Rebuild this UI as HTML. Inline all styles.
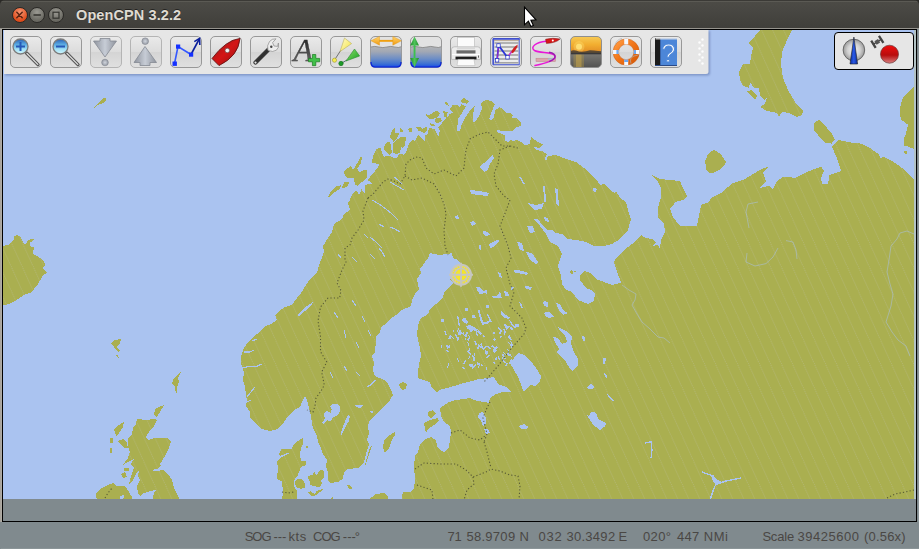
<!DOCTYPE html>
<html><head><meta charset="utf-8"><title>OpenCPN 3.2.2</title>
<style>
html,body{margin:0;padding:0;}
body{width:919px;height:549px;overflow:hidden;position:relative;background:#808a8e;font-family:"Liberation Sans","DejaVu Sans",sans-serif;}
div{position:absolute;}
#titlebar{left:0;top:0;width:919px;height:28px;border-radius:5px 5px 0 0;background:linear-gradient(#3b3a36 0,#3b3a36 1px,#5b5a54 1px,#5b5a54 2px,#4c4b46 2px,#403f3b 27px,#403f3b);}
#titlebar .t{left:76px;top:6px;font-size:14.5px;font-weight:bold;color:#dfdbd2;letter-spacing:0.1px;white-space:nowrap;line-height:18px;text-shadow:0 -1px 0 rgba(0,0,0,.5);}
.wb{top:7px;width:16px;height:16px;border-radius:50%;box-sizing:border-box;border:1px solid #2b2a27;}
#canvasbg{left:3px;top:30px;width:911px;height:491px;background:#808a8e;}
.ln{background:#000;}
#map{position:absolute;left:3px;top:30px;}
#inst{left:834px;top:32px;width:80px;height:38px;}
#status{left:0;top:522px;width:919px;height:27px;background:#808a8e;color:#4a4744;font-size:13px;line-height:27px;white-space:nowrap;}
#status span{position:absolute;top:1px;}
</style></head><body>
<div style="left:0;top:0;width:919px;height:10px;background:#2a2926"></div>
<div id="titlebar">
 <div class="wb" style="left:11.5px;background:radial-gradient(circle at 50% 30%,#f79774,#de4c1b 70%);"></div>
 <div class="wb" style="left:29px;background:radial-gradient(circle at 50% 30%,#9a9992,#6a6962 70%);"></div>
 <div class="wb" style="left:48px;background:radial-gradient(circle at 50% 30%,#9a9992,#6a6962 70%);"></div>
 <div class="t">OpenCPN 3.2.2</div>
 <svg width="919" height="30" style="position:absolute;left:0;top:0"><path d="M524.5,7.2 V24.8 L528.4,21.2 L530.9,26.6 L533.4,25.4 L530.9,20.2 L536,19.8 Z" fill="#fff" stroke="#000" stroke-width="1.1" stroke-linejoin="miter"/><g stroke="#3a2a22" stroke-width="1.5" fill="none" stroke-linecap="round"><path d="M16.8,12.3 l5.4,5.4 M22.2,12.3 l-5.4,5.4" stroke="#5a2412"/><path d="M34,15 h6.4" stroke="#33322e"/><rect x="53" y="12.2" width="6" height="6" stroke="#33322e" stroke-width="1.2"/></g></svg>
</div>
<div style="left:0;top:28px;width:919px;height:1px;background:#96948e"></div>
<div style="left:0;top:29px;width:1px;height:520px;background:#a8a49d"></div>
<div style="left:1px;top:29px;width:1px;height:493px;background:#b0aca5"></div>
<div style="left:918px;top:29px;width:1px;height:520px;background:#8b9598"></div>
<div style="left:1px;top:548px;width:918px;height:1px;background:#8b9598;z-index:5"></div>
<div style="left:914px;top:30px;width:2px;height:469px;background:#b3c3c5;z-index:3"></div>
<div class="ln" style="left:2px;top:29px;width:915px;height:1px"></div>
<div class="ln" style="left:2px;top:29px;width:1px;height:493px"></div>
<div class="ln" style="left:916px;top:29px;width:1px;height:493px"></div>
<div class="ln" style="left:2px;top:521px;width:915px;height:1px"></div>
<div id="canvasbg"></div>
<svg id="map" width="911" height="469" viewBox="3 30 911 469" shape-rendering="crispEdges">
<defs><pattern id="h" width="11" height="24.2" patternUnits="userSpaceOnUse"><path d="M0,0 L11,24.2" stroke="#b5b87c" stroke-width="0.85" stroke-dasharray="1.1,1.1" fill="none" shape-rendering="auto"/></pattern></defs>
<rect x="3" y="30" width="911" height="469" fill="#aac3f0"/>
<g id="land">
<path d="M401,501 L403,492 L410,492 L414,488 L415,480 L414,466 L415,456 L418,452 L420,444 L426,439 L431,437 L436,440 L437,446 L440,450 L444,452 L449,447 L450,440 L451,432 L450,426 L444,422 L441,416 L440,408 L443,406 L449,402 L456,400 L464,399 L470,398 L477,401 L484,402 L489,403 L490,398 L496,394 L502,392 L512,392 L506,387 L498,384 L494,377 L488,378 L479,379 L472,381 L464,383 L454,386 L447,388 L442,389 L437,392 L432,388 L430,382 L423,380 L418,378 L418,372 L419,364 L421,356 L420,348 L418,340 L417,334 L418,326 L420,319 L428,314 L430,309 L436,304 L442,299 L445,291 L449,288 L453,283 L450,280 L461,264 L458,260 L453,258 L452,253 L447,254 L439,255 L430,253 L428,258 L423,265 L420,269 L421,273 L417,279 L418,284 L419,289 L415,294 L412,300 L411,306 L402,310 L396,315 L389,320 L386,324 L382,326 L379,334 L376,336 L376,340 L375,352 L372,356 L374,362 L373,370 L375,376 L384,380 L388,384 L391,390 L393,395 L390,400 L388,402 L382,408 L376,414 L370,420 L368,426 L369,433 L367,440 L369,444 L366,454 L364,462 L360,467 L358,468 L348,469 L344,472 L343,479 L338,482 L330,483 L328,480 L328,472 L326,466 L327,460 L323,454 L321,448 L318,442 L317,436 L314,430 L312,424 L311,416 L309,408 L307,400 L305.6,397.4 L304.6,396.6 L303.4,399 L302,402 L300,407 L294,410 L288,416 L284,422 L278,429 L270,431 L262,429 L256,424 L250,418 L250,412 L246,406 L247,400 L246,395 L245,387 L243,380 L244,372 L241,364 L241,356 L244,348 L249,341 L254,336 L260,332 L264,327 L271,324 L277,320 L275,315 L278,312 L285,307 L292,305 L297,298 L301,293 L306,285 L311,278 L317,273 L320,262 L321,260 L324,252 L323,246 L328,238 L332,232 L334,224 L342,219 L344,214 L350,210 L348,203 L352,197 L349.5,200 L352.8,193.6 L356,190.3 L359.3,194.6 L361.5,189.2 L365.4,194.6 L364.8,185.9 L368,183.7 L372.5,183.7 L368,180.4 L370.3,176 L374.6,171.7 L377.9,167.3 L380,163.5 L375.7,163.5 L371.4,163 L373.6,154.2 L376.8,148.7 L380.7,148.2 L382.3,153.1 L384.2,157 L388,155.4 L391.9,157 L396.8,158.6 L399,153.7 L403.9,154.8 L406,152.6 L407.7,147.2 L409.3,142.8 L413.2,139 L414.8,141.7 L418,135 L422,137.9 L425.2,142.2 L424.6,136.2 L427.9,133.5 L429,128 L434.5,129 L438.3,136.2 L440,130.8 L438.3,127.5 L442,123 L446.6,118.2 L449.8,113.9 L453,112.8 L449.8,109.5 L453,104.6 L457.5,104.6 L460.2,107.3 L460.8,104 L466.2,106.2 L463.5,110 L461.3,113.9 L458,119.3 L457,131.3 L460.2,130.3 L461.9,123.7 L466.2,116 L470.6,109.5 L475,105.1 L473.3,112.8 L472.8,120.4 L473.9,122.6 L477.7,118.2 L480.4,112.8 L482,108.4 L481,103 L485.4,100.2 L491.4,100.7 L494.6,104.6 L493,108.4 L491.4,112.8 L489.2,119.3 L491.4,120.4 L494,117.1 L495.2,110.6 L499.6,106.8 L503.9,110.6 L506.7,113.3 L510,112.8 L512.7,115.5 L512.1,117.7 L516.5,118.2 L521.4,122.6 L521.4,125.3 L516.5,127.5 L512.7,131.3 L505.6,130.8 L496.8,130.3 L496.8,131.9 L502.3,134.1 L505.6,135.7 L504.5,140 L507.8,142.3 L511,139 L512.7,141.2 L516.5,140 L520.9,141.7 L524.7,145.6 L529.6,143.9 L531.3,136.8 L535,140 L540,143.4 L543,144 L539,148 L534,147 L536,150 L542,151 L547,154 L545,158 L546,161 L548,156 L556,155 L566,159 L576,162 L584,168 L592,176 L598,182 L600,185 L604,184 L610,190 L615,193 L616,191 L620,198 L626,202 L628,210 L631,219 L628,230 L620,239 L612,244 L604,246 L594,246 L586,242 L576,240 L568,239 L562,234 L556,233 L552,230 L547,230 L543,226 L538,219 L534,219 L540,226 L546,234 L550,242 L558,246 L562,254 L560,260 L558,266 L561,276 L562,284 L566,290 L572,292 L578,300 L588,304 L594,301 L595,294 L591,290 L586,288 L580,280 L580,275 L585,271 L590,273 L596,279 L604,282 L612,285 L616,284 L620,283 L622,285 L619,277 L616,269 L614,262 L617,257 L624,250 L632,244 L638,238 L641,235 L646,238 L652,239 L656,243 L652,246 L658,245 L660,249 L661,240 L665,232 L664,224 L658,217 L658,208 L660,200 L661,198 L661,188 L658,182 L652,175 L660,179 L670,180 L680,181 L683,188 L687,196 L683,200 L675.5,202 L670,209 L673,217 L680,226 L697,226 L699.5,213 L701,205 L709,202 L711,198 L721,193 L732,183.5 L745,179 L753,174 L762,169 L769,166.6 L763,172 L766,181 L759,188 L769,186 L773,189 L777,181 L784,176.5 L795.5,178 L807,172 L821,166.6 L824,171 L821,178 L822,183.5 L828,183.5 L829.5,175 L841,171 L836.5,157 L832,147 L838,140 L852,142.6 L859,143 L867.7,146.6 L878.7,154 L881,158.6 L883,156.4 L891.8,160.8 L902.8,168.5 L914,180 L914,501Z" fill="#aaaf50" />
<path d="M3,246 L9,244.5 L14,240 L14.5,236 L17.5,235 L21,237.5 L24,244 L26,244.5 L27.5,241 L31,239 L35,239 L30.5,242.5 L30,246 L34,247.5 L32.5,254 L37.5,256 L44,261 L45,265.5 L42.5,267.5 L47,272.5 L42.5,276 L37.5,285 L31,292.5 L24,295 L15,301 L7.5,304.5 L3,304.5Z" fill="#aaaf50" />
<path d="M94,107.5 L98,103.5 L103.5,98 L106,98 L105.5,101.5 L103,103 L100,104 L98.5,104.5 L94.5,108Z" fill="#aaaf50" />
<path d="M713.7,149.7 L720.7,154 L726.4,162.4 L720.7,169.4 L710.8,173.7 L706,169.4 L705.2,161 L708,154Z" fill="#aaaf50" />
<path d="M814,123 L819,119.6 L823,124 L827,128 L832,134 L834.6,139.6 L831.6,143.6 L825,142.6 L819.5,137 L814,130Z" fill="#aaaf50" />
<path d="M760,30 L755,36 L749,43 L753,48 L751,56 L750,64 L743,64 L739,72 L740,80 L743,86 L749,88 L750,82 L754,88 L759,88 L760,96 L765,100 L767,97 L765,104 L760,107 L767,111 L777,113 L779,117 L782,112 L789,113 L797,117 L802,115 L803,111 L795,102 L788,90 L783,78 L781,64 L782,52 L787,40 L791,32 L792,30Z" fill="#aaaf50" />
<path d="M747,91 L752,90 L757,96 L755,100 L750,95Z" fill="#aaaf50" />
<path d="M914,86.4 L907,93 L902.8,98.4 L900.6,105 L899.5,113.8 L901.7,120 L908,124.7 L906,133.5 L904,137.8 L904,145.5 L908,146.6 L914,148.8Z" fill="#aaaf50" />
<path d="M904,151 L907,151 L907,154 L905,154Z" fill="#aaaf50" />
<path d="M111,343 L115,340 L121,339 L120,343 L117,347 L120,351 L118,352 L114,347Z" fill="#aaaf50" />
<path d="M116,355 L117,354.5 L119,357.5 L118,358Z" fill="#aaaf50" />
<path d="M181,372 L178,378 L179,382 L177,387 L177,393 L175.6,392 L175,386 L172,384 L174,378 L178,374Z" fill="#aaaf50" />
<path d="M155,409 L159,407 L164,405 L160,412 L157,417 L154,415Z" fill="#aaaf50" />
<path d="M137,419 L146,420 L154,419 L157,420 L154,426 L149,432 L146,437 L148,440 L154,438 L168,438 L171,442 L169,448 L166,454 L162,461 L159,464 L161,466 L157,469 L150,470 L156,471 L163,470 L168,474 L172,480 L174,488 L178,496 L181,501 L152,501 L154,493 L156,490 L150,491 L144,493 L140,496 L138,494 L137,486 L140,480 L138,476 L139,470 L136,474 L133,480 L129,484 L131,476 L134,468 L131,464 L134,459 L128,462 L123,465 L128,458 L130,452 L128,446 L128,438 L132,434 L133,428 L136,424Z" fill="#aaaf50" />
<path d="M114,429 L119,425 L124,422 L123,427 L119,433 L116,436Z" fill="#aaaf50" />
<path d="M110,438 L113,438 L113,443 L110.5,443Z" fill="#aaaf50" />
<path d="M110,448 L111.6,448 L111.6,453 L110,453Z" fill="#aaaf50" />
<path d="M118,441 L123,439 L127,443 L128,448 L125,448 L121,445Z" fill="#aaaf50" />
<path d="M121,474 L125,472 L127,477 L123,478Z" fill="#aaaf50" />
<path d="M124,468 L129,468 L129,471 L124,471Z" fill="#aaaf50" />
<path d="M96,494 L100,489 L106,486 L113,483 L116,486 L125,486 L129,492 L132,497 L131.6,501 L123,501 L124,495 L120,496 L119.6,501 L97,501Z" fill="#aaaf50" />
<path d="M303.3,437 L301.4,438.8 L295.8,442.5 L293.4,445.6 L291.5,449.3 L281.6,449.3 L278.5,454.3 L280.5,455.8 L289,452.4 L289.4,453.6 L281,457.4 L277.3,461.7 L277.9,470.4 L276.7,479 L281.6,481.5 L282.9,488.9 L282.2,501 L297.1,501 L296.5,490.2 L294,486.5 L294.6,479 L297.7,475.3 L299.6,470.4 L301.4,466.7 L305.7,465.4 L306.4,461.7 L301.4,460.5 L299.6,455.5 L300.8,449.3 L302.7,444.4Z" fill="#aaaf50" />
<path d="M294.6,481.5 L298.9,478.4 L302.7,479.6 L305.1,484 L304.5,487.7 L301.4,488.9 L297.1,487.7 L295.2,484.6Z" fill="#aaaf50" />
<path d="M307.6,476.5 L312.6,474.7 L314.4,472.2 L316.9,475.3 L318.7,471.6 L321.8,469.7 L324.3,471 L324.3,477.8 L321.2,480.3 L321.8,484 L320,487 L315.6,486.5 L310.7,485.2 L309.5,480.9Z" fill="#aaaf50" />
<path d="M308.2,492.6 L310.7,491.4 L314.4,493.9 L316.9,490.8 L323,489 L320,492 L316.3,495.1 L313.2,496.4 L310.7,495.7Z" fill="#aaaf50" />
<path d="M347.2,484.6 L350.3,485.2 L352.2,488.3 L350.3,489.6 L347.8,487.7Z" fill="#aaaf50" />
<path d="M372,445 L370,452 L366,464 L365,465 L368,454 L370,447Z" fill="#aaaf50" />
<path d="M395,432 L390,435 L384,440 L383,448 L385,453 L389,448 L392,440 L395,435Z" fill="#aaaf50" />
<path d="M424,423 L430,420 L438,418 L439,421 L434,425 L428,429 L426,433 L425,428Z" fill="#aaaf50" />
<path d="M428,412 L433,410 L436,414 L431,418 L428,416Z" fill="#aaaf50" />
<path d="M399,384 L403,382 L407,384 L406,389 L402,390 L400,388Z" fill="#aaaf50" />
<path d="M367,501 L376,494 L384,493 L388,496 L389,501Z" fill="#aaaf50" />
<path d="M331.7,496.4 L335.4,501 L331,501Z" fill="#aaaf50" />
<path d="M569.5,271 L572,270 L573.5,273 L571,274.5Z" fill="#aaaf50" />
<path d="M574,270.5 L576,270.8 L575.6,272.4 L574.2,272Z" fill="#aaaf50" />
<path d="M328.2,196.8 L331,191.4 L336.4,185.9 L340.8,185.4 L340.2,188.6 L334.2,192.5 L330,196.5Z" fill="#aaaf50" />
<path d="M341.9,188 L344,182.6 L349.5,181.5 L347.3,187Z" fill="#aaaf50" />
<path d="M344,171.7 L350.6,165.7 L352.8,169.5 L355,167.3 L360.4,157 L362,157.5 L360.4,164 L357.2,168.4 L359.9,172.8 L363.7,169.5 L367.5,170 L367,177.2 L362.6,181.5 L360.4,182.6 L357.7,185.9 L355,184.8 L353.9,178.2 L348.4,178.2 L345.1,176Z" fill="#aaaf50" />
<path d="M383.7,147.7 L386.4,142.8 L390.2,141.7 L391,147 L392,152 L389.5,154.5 L386,152 L384,150Z" fill="#aaaf50" />
<path d="M393.5,142.8 L397.3,139.5 L400,137.3 L406,137.3 L405,145 L402.8,148.3 L401.7,146 L399.5,152.6 L396.8,154.3 L393.5,152.6 L393,147.2Z" fill="#aaaf50" />
<path d="M390.2,137.3 L390.8,132.4 L394.6,128 L395.1,132.4 L399,133.5 L397.3,137.9 L393.5,141.7Z" fill="#aaaf50" />
<path d="M399.5,127 L403.9,132 L400.6,132.4Z" fill="#aaaf50" />
<path d="M408.3,128.6 L412,128.3 L411.5,132.4 L408.6,131.3Z" fill="#aaaf50" />
<path d="M416,127.5 L420,126.4 L422.5,129.1 L426.8,126.4 L427,130 L424,133 L421,131.3 L418.5,130.8Z" fill="#aaaf50" />
<path d="M425.2,114 L429.6,115 L433.4,112.2 L437.8,110.5 L440,113.8 L436.7,117.7 L432,119.3 L429,118.7Z" fill="#aaaf50" />
<path d="M434.5,118.6 L441,118 L442,121 L437,123.7 L435,121Z" fill="#aaaf50" />
<path d="M429.6,123.1 L434,124.2 L435.6,126.4 L431,126.4Z" fill="#aaaf50" />
<path d="M443.2,111.1 L447.6,112.2 L446.5,117.5 L444,117Z" fill="#aaaf50" />
<path d="M460.2,101 L463.5,97.5 L466,99.6 L469.5,101.7 L467,103.6 L462.4,103Z" fill="#aaaf50" />
<path d="M445,102 L447.6,102.6 L448.7,105.7 L446,105Z" fill="#aaaf50" />
<path d="M306,446 L308,446 L308,447.5 L306,447.5Z" fill="#aaaf50" />
</g>
<g id="hatch">
<path d="M401,501 L403,492 L410,492 L414,488 L415,480 L414,466 L415,456 L418,452 L420,444 L426,439 L431,437 L436,440 L437,446 L440,450 L444,452 L449,447 L450,440 L451,432 L450,426 L444,422 L441,416 L440,408 L443,406 L449,402 L456,400 L464,399 L470,398 L477,401 L484,402 L489,403 L490,398 L496,394 L502,392 L512,392 L506,387 L498,384 L494,377 L488,378 L479,379 L472,381 L464,383 L454,386 L447,388 L442,389 L437,392 L432,388 L430,382 L423,380 L418,378 L418,372 L419,364 L421,356 L420,348 L418,340 L417,334 L418,326 L420,319 L428,314 L430,309 L436,304 L442,299 L445,291 L449,288 L453,283 L450,280 L461,264 L458,260 L453,258 L452,253 L447,254 L439,255 L430,253 L428,258 L423,265 L420,269 L421,273 L417,279 L418,284 L419,289 L415,294 L412,300 L411,306 L402,310 L396,315 L389,320 L386,324 L382,326 L379,334 L376,336 L376,340 L375,352 L372,356 L374,362 L373,370 L375,376 L384,380 L388,384 L391,390 L393,395 L390,400 L388,402 L382,408 L376,414 L370,420 L368,426 L369,433 L367,440 L369,444 L366,454 L364,462 L360,467 L358,468 L348,469 L344,472 L343,479 L338,482 L330,483 L328,480 L328,472 L326,466 L327,460 L323,454 L321,448 L318,442 L317,436 L314,430 L312,424 L311,416 L309,408 L307,400 L305.6,397.4 L304.6,396.6 L303.4,399 L302,402 L300,407 L294,410 L288,416 L284,422 L278,429 L270,431 L262,429 L256,424 L250,418 L250,412 L246,406 L247,400 L246,395 L245,387 L243,380 L244,372 L241,364 L241,356 L244,348 L249,341 L254,336 L260,332 L264,327 L271,324 L277,320 L275,315 L278,312 L285,307 L292,305 L297,298 L301,293 L306,285 L311,278 L317,273 L320,262 L321,260 L324,252 L323,246 L328,238 L332,232 L334,224 L342,219 L344,214 L350,210 L348,203 L352,197 L349.5,200 L352.8,193.6 L356,190.3 L359.3,194.6 L361.5,189.2 L365.4,194.6 L364.8,185.9 L368,183.7 L372.5,183.7 L368,180.4 L370.3,176 L374.6,171.7 L377.9,167.3 L380,163.5 L375.7,163.5 L371.4,163 L373.6,154.2 L376.8,148.7 L380.7,148.2 L382.3,153.1 L384.2,157 L388,155.4 L391.9,157 L396.8,158.6 L399,153.7 L403.9,154.8 L406,152.6 L407.7,147.2 L409.3,142.8 L413.2,139 L414.8,141.7 L418,135 L422,137.9 L425.2,142.2 L424.6,136.2 L427.9,133.5 L429,128 L434.5,129 L438.3,136.2 L440,130.8 L438.3,127.5 L442,123 L446.6,118.2 L449.8,113.9 L453,112.8 L449.8,109.5 L453,104.6 L457.5,104.6 L460.2,107.3 L460.8,104 L466.2,106.2 L463.5,110 L461.3,113.9 L458,119.3 L457,131.3 L460.2,130.3 L461.9,123.7 L466.2,116 L470.6,109.5 L475,105.1 L473.3,112.8 L472.8,120.4 L473.9,122.6 L477.7,118.2 L480.4,112.8 L482,108.4 L481,103 L485.4,100.2 L491.4,100.7 L494.6,104.6 L493,108.4 L491.4,112.8 L489.2,119.3 L491.4,120.4 L494,117.1 L495.2,110.6 L499.6,106.8 L503.9,110.6 L506.7,113.3 L510,112.8 L512.7,115.5 L512.1,117.7 L516.5,118.2 L521.4,122.6 L521.4,125.3 L516.5,127.5 L512.7,131.3 L505.6,130.8 L496.8,130.3 L496.8,131.9 L502.3,134.1 L505.6,135.7 L504.5,140 L507.8,142.3 L511,139 L512.7,141.2 L516.5,140 L520.9,141.7 L524.7,145.6 L529.6,143.9 L531.3,136.8 L535,140 L540,143.4 L543,144 L539,148 L534,147 L536,150 L542,151 L547,154 L545,158 L546,161 L548,156 L556,155 L566,159 L576,162 L584,168 L592,176 L598,182 L600,185 L604,184 L610,190 L615,193 L616,191 L620,198 L626,202 L628,210 L631,219 L628,230 L620,239 L612,244 L604,246 L594,246 L586,242 L576,240 L568,239 L562,234 L556,233 L552,230 L547,230 L543,226 L538,219 L534,219 L540,226 L546,234 L550,242 L558,246 L562,254 L560,260 L558,266 L561,276 L562,284 L566,290 L572,292 L578,300 L588,304 L594,301 L595,294 L591,290 L586,288 L580,280 L580,275 L585,271 L590,273 L596,279 L604,282 L612,285 L616,284 L620,283 L622,285 L619,277 L616,269 L614,262 L617,257 L624,250 L632,244 L638,238 L641,235 L646,238 L652,239 L656,243 L652,246 L658,245 L660,249 L661,240 L665,232 L664,224 L658,217 L658,208 L660,200 L661,198 L661,188 L658,182 L652,175 L660,179 L670,180 L680,181 L683,188 L687,196 L683,200 L675.5,202 L670,209 L673,217 L680,226 L697,226 L699.5,213 L701,205 L709,202 L711,198 L721,193 L732,183.5 L745,179 L753,174 L762,169 L769,166.6 L763,172 L766,181 L759,188 L769,186 L773,189 L777,181 L784,176.5 L795.5,178 L807,172 L821,166.6 L824,171 L821,178 L822,183.5 L828,183.5 L829.5,175 L841,171 L836.5,157 L832,147 L838,140 L852,142.6 L859,143 L867.7,146.6 L878.7,154 L881,158.6 L883,156.4 L891.8,160.8 L902.8,168.5 L914,180 L914,501Z" fill="url(#h)" />
<path d="M760,30 L755,36 L749,43 L753,48 L751,56 L750,64 L743,64 L739,72 L740,80 L743,86 L749,88 L750,82 L754,88 L759,88 L760,96 L765,100 L767,97 L765,104 L760,107 L767,111 L777,113 L779,117 L782,112 L789,113 L797,117 L802,115 L803,111 L795,102 L788,90 L783,78 L781,64 L782,52 L787,40 L791,32 L792,30Z" fill="url(#h)" />
<path d="M3,246 L9,244.5 L14,240 L14.5,236 L17.5,235 L21,237.5 L24,244 L26,244.5 L27.5,241 L31,239 L35,239 L30.5,242.5 L30,246 L34,247.5 L32.5,254 L37.5,256 L44,261 L45,265.5 L42.5,267.5 L47,272.5 L42.5,276 L37.5,285 L31,292.5 L24,295 L15,301 L7.5,304.5 L3,304.5Z" fill="url(#h)" />
<path d="M137,419 L146,420 L154,419 L157,420 L154,426 L149,432 L146,437 L148,440 L154,438 L168,438 L171,442 L169,448 L166,454 L162,461 L159,464 L161,466 L157,469 L150,470 L156,471 L163,470 L168,474 L172,480 L174,488 L178,496 L181,501 L152,501 L154,493 L156,490 L150,491 L144,493 L140,496 L138,494 L137,486 L140,480 L138,476 L139,470 L136,474 L133,480 L129,484 L131,476 L134,468 L131,464 L134,459 L128,462 L123,465 L128,458 L130,452 L128,446 L128,438 L132,434 L133,428 L136,424Z" fill="url(#h)" />
<path d="M303.3,437 L301.4,438.8 L295.8,442.5 L293.4,445.6 L291.5,449.3 L281.6,449.3 L278.5,454.3 L280.5,455.8 L289,452.4 L289.4,453.6 L281,457.4 L277.3,461.7 L277.9,470.4 L276.7,479 L281.6,481.5 L282.9,488.9 L282.2,501 L297.1,501 L296.5,490.2 L294,486.5 L294.6,479 L297.7,475.3 L299.6,470.4 L301.4,466.7 L305.7,465.4 L306.4,461.7 L301.4,460.5 L299.6,455.5 L300.8,449.3 L302.7,444.4Z" fill="url(#h)" />
</g>
<g id="lakes">
<path d="M510,363 L518,353 L524,355 L530,360 L536,368 L541,376 L540,382 L535,386 L530,385 L526,390 L523,391 L521,384 L518,377 L514,370Z" fill="#aac3f0" />
<path d="M558,327 L566,331 L572,336 L571,344 L574,352 L578,359 L578,366 L572,371 L569,367 L566,362 L562,357 L556,352 L559,349 L555,342 L553,337 L558,338 L562,344 L567,342 L565,335 L560,331Z" fill="#aac3f0" />
<path d="M479,413 L483,412 L486,418 L486,424 L483,426 L481,421 L478,417Z" fill="#aac3f0" />
<path d="M484,429 L488,429 L490,433 L486,434Z" fill="#aac3f0" />
<path d="M519,426 L524,424 L529,427 L526,429 L521,429Z" fill="#aac3f0" />
<path d="M330,406.2 L332.8,403.5 L337.7,404 L340.4,407.3 L339.3,412.8 L336,416 L332.8,417.7 L330.6,421.5 L327.3,420.4 L323.5,423.7 L322.4,422.6 L325.1,418.3 L323.5,415 L326.2,410.6 L330.6,412.8 L331.7,409.5Z" fill="#aac3f0" />
<path d="M348,415 L349.7,416 L349.2,420.4 L345.9,425.9 L343.2,431.4 L341.5,434.6 L341,432.5 L343.2,425.9 L345.9,419.3Z" fill="#aac3f0" />
<path d="M354,405 L359,405.4 L363.4,405.4 L359.6,408.4 L356.8,407Z" fill="#aac3f0" />
<path d="M370,410.4 L373.2,411.6 L372.6,413 L370,412Z" fill="#aac3f0" />
<path d="M367.2,386 L371,383.6 L375.4,379.6 L376,380.6 L371.6,385 L367.6,387.6Z" fill="#aac3f0" />
<path d="M479,167 L484,163 L488,159 L493,155 L494,158 L490,164 L488,170 L484,172 L482,169Z" fill="#aac3f0" />
<path d="M517,242 L522,243 L524,251 L520,250Z" fill="#aac3f0" />
<path d="M526,252 L532,253 L538,262 L536,264 L530,260Z" fill="#aac3f0" />
<path d="M527,226 L533,226 L535,232 L530,233Z" fill="#aac3f0" />
<path d="M528,203 L536,205 L544,203 L542,209 L534,210Z" fill="#aac3f0" />
<path d="M556,303 L560,304 L563,310 L568,313 L563,315 L559,310Z" fill="#aac3f0" />
<path d="M545,312 L550,312 L554,317 L548,318Z" fill="#aac3f0" />
<path d="M543,302 L547,302 L548,307 L544,306Z" fill="#aac3f0" />
<path d="M582,336 L585,337 L585,341 L583,341Z" fill="#aac3f0" />
<path d="M587,387 L591,384 L595,387 L592,389 L588,389Z" fill="#aac3f0" />
<path d="M603,358 L606,358 L605,364 L603,364Z" fill="#aac3f0" />
<path d="M604,373 L607,375 L607.6,378 L605,377Z" fill="#aac3f0" />
<path d="M586.5,415 L589,416 L591,411.5 L595,412 L597,414.6 L598,419 L602,421 L606,423.4 L604.6,427 L602,428 L600,431 L597,427.6 L594,426 L591,421.6Z" fill="#aac3f0" />
<path d="M525,286 L532,287 L531,290 L526,289Z" fill="#aac3f0" />
<path d="M504,291 L508,292 L509,296 L505,295Z" fill="#aac3f0" />
<path d="M544,217 L548,218 L549,222 L545,221Z" fill="#aac3f0" />
<path d="M519,177 L521,177.6 L525,184 L523.4,184Z" fill="#aac3f0" />
<path d="M543,186 L545,186 L546,202 L544.4,202Z" fill="#aac3f0" />
<path d="M555,188 L557.6,189 L559,206 L556.6,205Z" fill="#aac3f0" />
<path d="M593,188 L597,188.6 L596,192 L593.6,191.4Z" fill="#aac3f0" />
<path d="M470,190 L480,191 L489,193 L488,196 L478,195 L471,194Z" fill="#aac3f0" />
<path d="M297,315 L304,308 L313,302 L312,304 L305,311 L299,316Z" fill="#aac3f0" />
</g>
<g id="lakes2" fill="#aac3f0" stroke="none">
<path d="M476,286.5 L480,287.6 L483.5,291 L487.4,289.8 L487.4,295.3 L484.6,292.6 L480,294.7 L477.5,291Z"/>
<path d="M492,295.5 L497,296 L499.5,292 L501,294 L501.6,298 L496,298 L492.5,297.5Z"/>
<path d="M504.5,292 L507,293 L507.6,296 L505,296Z"/>
<path d="M511,286 L513.6,287 L513.4,290 L511.4,289.5Z"/>
<path d="M519,302 L521,303 L523,308 L521.4,307.6Z"/>
<path d="M500.5,310.6 L504.3,313.9 L509.8,317.7 L508,319 L503,317 L501,314Z"/>
<path d="M508.7,319 L512,323 L516,328 L514.6,328 L510.6,323.6Z"/>
<path d="M515,324 L519.6,323.7 L518.6,327 L515.6,327Z"/>
<path d="M504,323.7 L506.4,324.6 L508.7,329 L506.6,329 L504.6,326.4Z"/>
<path d="M478,310 L479.6,310 L481.4,317 L483.6,322.6 L487,321.4 L490.6,319.4 L491.4,321 L487.4,323.6 L482.6,325 L480.6,321 L479,315Z"/>
<path d="M486.4,314 L488,314.4 L491.6,321.6 L490,321.6Z"/>
<path d="M465,308.5 L468,308 L467.6,311 L465.4,311Z"/>
<path d="M471.5,315.4 L475,315 L476,318 L472.6,318.4Z"/>
<path d="M457,316 L458.4,316.4 L460,326 L458.6,326Z"/>
<path d="M461.7,319 L465,317.7 L468,322 L466.4,323.7 L463,322Z"/>
<path d="M466,326 L470,325 L474,327 L478,329.6 L476,331 L471,329.6 L467,328.6Z"/>
<path d="M441,319.4 L443.6,319 L444,322 L441.6,322Z"/>
<path d="M485.7,305 L488.6,304.6 L489,308 L486.4,308Z"/>
<path d="M479,245 L481,245.6 L481,250 L479.4,249Z"/>
<path d="M489,244 L493,242 L497,240 L500,241 L496,244 L493,247 L490,248Z"/>
<path d="M483,231 L488,232 L490,235 L486,236 L483.6,234Z"/>
<path d="M498,272 L500.6,273 L502,278 L499.6,277Z"/>
<path d="M470,222 L474,221 L476,224 L472,226Z"/>
<path d="M455,216 L458,215 L459,219 L456,219.6Z"/>
<path d="M514,270 L521,270.6 L528,273 L527,275 L520,273.4 L514.6,272.4Z"/>
<path d="M544,301 L547.6,302 L548,307 L545,306Z"/>
<path d="M544,312.6 L549,313 L553,317 L549,318 L545,316Z"/>
<path d="M464.4,332.6 L463.7,334.6 L462.3,334.1 L463.0,332.1Z"/>
<path d="M482.4,364.0 L482.8,366.1 L481.5,366.4 L481.1,364.3Z"/>
<path d="M508.0,348.5 L509.4,353.7 L508.5,354.0 L507.1,348.7Z"/>
<path d="M461.3,331.4 L462.1,334.2 L460.4,334.7 L459.6,331.9Z"/>
<path d="M447.6,349.6 L448.7,351.5 L447.2,352.3 L446.2,350.5Z"/>
<path d="M486.6,346.5 L483.6,350.1 L482.5,349.2 L485.5,345.6Z"/>
<path d="M466.9,335.2 L466.1,339.8 L465.1,339.7 L466.0,335.0Z"/>
<path d="M478.3,362.1 L479.2,364.8 L477.4,365.4 L476.4,362.7Z"/>
<path d="M476.6,331.2 L478.4,336.2 L477.1,336.6 L475.3,331.7Z"/>
<path d="M496.6,350.5 L494.7,352.7 L493.5,351.7 L495.4,349.4Z"/>
<path d="M481.5,343.4 L483.3,348.4 L482.0,348.9 L480.2,343.9Z"/>
<path d="M487.7,367.6 L486.7,370.3 L485.5,369.8 L486.5,367.1Z"/>
<path d="M442.3,345.4 L441.9,347.6 L441.0,347.4 L441.3,345.2Z"/>
<path d="M451.3,335.8 L448.1,339.6 L447.3,339.0 L450.5,335.2Z"/>
<path d="M470.4,337.6 L468.7,340.5 L467.4,339.8 L469.1,336.8Z"/>
<path d="M511.2,354.3 L511.8,356.8 L510.9,357.1 L510.2,354.5Z"/>
<path d="M456.2,334.8 L458.2,338.2 L457.2,338.8 L455.2,335.4Z"/>
<path d="M507.8,352.6 L510.3,355.1 L509.0,356.4 L506.5,353.9Z"/>
<path d="M468.0,341.6 L469.4,345.5 L468.5,345.9 L467.1,342.0Z"/>
<path d="M510.9,343.4 L511.9,347.3 L510.9,347.6 L509.9,343.7Z"/>
<path d="M479.6,366.2 L478.6,368.0 L477.6,367.5 L478.7,365.7Z"/>
<path d="M452.1,336.7 L450.1,339.1 L449.3,338.5 L451.3,336.1Z"/>
<path d="M512.3,345.7 L511.6,347.7 L510.7,347.4 L511.4,345.4Z"/>
<path d="M492.4,345.4 L495.0,348.0 L494.2,348.8 L491.6,346.2Z"/>
<path d="M494.5,338.1 L496.0,339.6 L494.7,340.9 L493.2,339.4Z"/>
<path d="M467.9,332.5 L466.6,336.1 L464.9,335.5 L466.2,331.9Z"/>
<path d="M486.0,350.4 L486.8,354.9 L485.7,355.1 L484.9,350.6Z"/>
<path d="M498.6,356.1 L500.4,359.4 L499.3,360.0 L497.4,356.8Z"/>
<path d="M512.4,359.3 L511.6,361.6 L510.1,361.1 L510.9,358.7Z"/>
<path d="M472.4,363.6 L473.3,368.9 L472.0,369.1 L471.1,363.8Z"/>
<path d="M447.3,344.7 L449.1,347.8 L447.4,348.8 L445.6,345.7Z"/>
<path d="M475.8,353.9 L474.7,355.7 L473.3,354.9 L474.3,353.1Z"/>
<path d="M497.6,357.7 L496.7,360.0 L495.1,359.4 L495.9,357.0Z"/>
<path d="M492.2,345.3 L492.8,347.3 L491.7,347.6 L491.2,345.6Z"/>
<path d="M487.7,350.7 L488.6,354.2 L486.7,354.7 L485.8,351.2Z"/>
<path d="M478.2,330.0 L482.0,333.8 L480.8,335.0 L477.0,331.2Z"/>
<path d="M494.1,331.3 L495.4,333.5 L493.8,334.4 L492.5,332.2Z"/>
<path d="M459.6,337.9 L457.7,341.3 L456.6,340.7 L458.6,337.3Z"/>
<path d="M498.8,327.2 L502.4,330.8 L501.3,331.9 L497.7,328.3Z"/>
<path d="M470.0,363.5 L471.9,366.8 L470.6,367.5 L468.7,364.3Z"/>
<path d="M502.8,357.2 L504.0,361.7 L502.9,362.0 L501.7,357.5Z"/>
<path d="M473.5,355.9 L475.7,358.0 L474.6,359.0 L472.5,356.9Z"/>
<path d="M474.7,358.5 L475.7,360.2 L474.8,360.8 L473.8,359.0Z"/>
<path d="M497.8,347.2 L494.8,350.7 L493.4,349.5 L496.4,345.9Z"/>
<path d="M463.0,366.6 L464.8,368.4 L463.9,369.2 L462.1,367.4Z"/>
<path d="M479.7,345.1 L478.9,349.4 L477.1,349.1 L477.9,344.8Z"/>
<path d="M507.9,363.3 L506.2,366.3 L505.0,365.7 L506.7,362.7Z"/>
<path d="M472.2,328.8 L473.0,330.7 L471.4,331.3 L470.7,329.4Z"/>
<path d="M504.5,331.3 L505.6,335.4 L504.6,335.7 L503.5,331.6Z"/>
<path d="M510.1,334.5 L510.7,337.7 L509.2,338.0 L508.7,334.7Z"/>
<path d="M463.2,333.3 L466.3,336.5 L465.7,337.1 L462.5,334.0Z"/>
<path d="M473.0,354.6 L474.2,358.1 L473.1,358.5 L471.8,355.0Z"/>
<path d="M449.1,363.2 L448.2,368.1 L447.2,368.0 L448.1,363.0Z"/>
<path d="M460.8,330.1 L459.9,335.1 L458.1,334.8 L459.0,329.7Z"/>
<path d="M470.2,347.9 L469.5,351.4 L468.3,351.2 L468.9,347.6Z"/>
<path d="M470.8,327.8 L472.2,331.7 L470.5,332.3 L469.1,328.4Z"/>
<path d="M483.3,335.2 L484.9,336.8 L484.3,337.5 L482.7,335.9Z"/>
<path d="M470.5,364.2 L471.2,366.1 L469.6,366.7 L469.0,364.8Z"/>
<path d="M508.5,335.6 L512.2,339.3 L511.1,340.4 L507.4,336.7Z"/>
<path d="M494.6,337.8 L495.9,339.9 L494.7,340.6 L493.5,338.4Z"/>
<path d="M511.0,326.6 L513.6,329.2 L512.2,330.5 L509.6,328.0Z"/>
<path d="M476.3,364.8 L473.2,368.5 L472.1,367.7 L475.2,364.0Z"/>
<path d="M479.6,362.8 L480.1,365.7 L479.0,365.9 L478.5,363.0Z"/>
<path d="M466.0,360.2 L464.6,364.1 L463.3,363.7 L464.8,359.8Z"/>
<path d="M512.5,360.8 L510.5,364.4 L508.9,363.5 L510.9,359.9Z"/>
<path d="M504.0,354.5 L502.3,356.6 L501.3,355.8 L503.1,353.7Z"/>
<path d="M452.7,336.7 L454.9,339.0 L454.0,339.9 L451.8,337.6Z"/>
<path d="M456.1,333.5 L456.5,335.6 L455.3,335.8 L454.9,333.7Z"/>
<path d="M457.1,357.2 L459.5,361.4 L458.6,362.0 L456.2,357.8Z"/>
<path d="M469.0,338.3 L469.6,340.4 L467.7,340.9 L467.1,338.8Z"/>
<path d="M488.9,356.2 L486.8,358.7 L485.8,357.9 L487.9,355.4Z"/>
<path d="M502.9,351.3 L506.3,354.7 L505.5,355.4 L502.1,352.0Z"/>
<path d="M494.9,349.8 L495.2,351.6 L493.6,351.9 L493.2,350.1Z"/>
<path d="M508.7,341.8 L510.1,343.2 L509.5,343.8 L508.1,342.4Z"/>
<path d="M487.9,345.3 L491.3,348.6 L490.1,349.8 L486.7,346.5Z"/>
<path d="M504.5,328.5 L506.1,332.8 L504.8,333.2 L503.2,329.0Z"/>
<path d="M502.4,336.4 L500.7,338.4 L499.5,337.4 L501.2,335.3Z"/>
<path d="M476.0,340.8 L476.8,345.0 L475.1,345.4 L474.3,341.1Z"/>
<path d="M445.6,330.8 L446.8,335.2 L445.6,335.5 L444.4,331.2Z"/>
<path d="M489.9,355.4 L488.0,357.6 L486.9,356.7 L488.7,354.5Z"/>
<path d="M473.5,357.2 L474.8,360.8 L473.6,361.2 L472.3,357.6Z"/>
<path d="M509.7,326.5 L506.6,330.2 L505.1,329.0 L508.2,325.3Z"/>
<path d="M511.1,340.6 L512.9,345.5 L512.0,345.9 L510.2,341.0Z"/>
<path d="M503.2,354.0 L505.8,358.4 L504.5,359.1 L502.0,354.7Z"/>
<path d="M470.2,356.2 L469.1,359.2 L468.2,358.9 L469.3,355.9Z"/>
<path d="M501.7,330.0 L501.0,334.4 L499.1,334.1 L499.9,329.7Z"/>
<path d="M459.9,327.8 L457.4,332.1 L456.6,331.7 L459.1,327.3Z"/>
<path d="M494.9,361.7 L495.5,363.6 L493.9,364.1 L493.4,362.1Z"/>
<path d="M459.1,337.4 L457.9,339.6 L456.8,338.9 L458.0,336.7Z"/>
<path d="M502.5,358.6 L506.2,362.2 L504.8,363.6 L501.2,360.0Z"/>
<path d="M468.3,350.5 L471.9,354.1 L470.9,355.1 L467.3,351.6Z"/>
<path d="M450.3,345.6 L449.8,348.4 L448.1,348.1 L448.6,345.3Z"/>
<path d="M469.2,334.8 L470.3,339.0 L469.3,339.2 L468.2,335.1Z"/>
<path d="M478.5,343.9 L481.7,347.2 L480.8,348.1 L477.5,344.9Z"/>
<path d="M454.6,329.9 L454.2,332.0 L453.1,331.8 L453.5,329.7Z"/>
</g>
<g id="streaks" fill="none" stroke="#aac3f0" stroke-width="1.1" stroke-linecap="butt">
<polyline points="372,200 379,204 386,209"/>
<polyline points="386,209 392,214 398,220"/>
<polyline points="394,177 398,180 402,184"/>
<polyline points="390,182 397,186 404,190"/>
<polyline points="379,224 384,227"/>
<polyline points="390,227 395,229 400,232"/>
<polyline points="364,234 368,238"/>
<polyline points="370,237 376,242 382,248"/>
<polyline points="379,248 382,252 385,257"/>
<polyline points="338,254 341,258"/>
<polyline points="352,257 357,262"/>
<polyline points="370,254 375,259"/>
<polyline points="242,368 249,366.5 255,367 262,364"/>
<polyline points="247,397 251,392 255,387"/>
<polyline points="244,352 250,352 254,350"/>
<polyline points="252,341 257,339"/>
<polyline points="247,402 251,400"/>
<polyline points="334,312 338,318"/>
<polyline points="352,300 356,306"/>
<polyline points="362,316 365,322"/>
<polyline points="344,330 346,338"/>
<polyline points="356,342 359,348"/>
<polyline points="368,330 371,336"/>
<polyline points="330,372 333,378"/>
<polyline points="344,366 347,371"/>
<polyline points="356,372 360,376"/>
</g><g id="borders" fill="none" stroke="#4e5032" stroke-width="1.1" stroke-dasharray="1.2,2.2" shape-rendering="auto" opacity="0.9">
<polyline points="368,198 374,193 383,182 388,179 394,181 400,184 405,176 406,164 410,160 416,157 422,158 426,168 434,174 444,170 450,173 456,176 464,168 465,158 466,150 470,139 480,134 488,132 496,140 502,146 510,146 518,148"/>
<polyline points="405,176 412,180 422,178 428,181 434,184 440,194 444,204 446,214 444,230 445,246 448,255"/>
<polyline points="510,146 500,150 498,164 494,174 496,186 504,196 510,200 504,216 500,226 504,236 508,246 511,258 506,268 510,284 514,292 510,306 516,312 522,318 526,328 524,334 510,350 498,366 484,382"/>
<polyline points="368,198 363,211 364,220 358,230 352,238 350,245 345,248 345,260 346,262 342,270 337,283 341,290.6 339.6,298 328,298 320.5,307 318,321 320.5,336.5 320.5,351.7 326.8,362 321.7,372 324.3,385 321,391 316,398 315,406 313,412 307,410"/>
<polyline points="451,433 460,430 470,438 480,440 486,435"/>
<polyline points="490,402 486,410 483,418 485,426 487,434 484,442"/>
<polyline points="484,442 487,452 489,460 491,468"/>
<polyline points="415,469 424,463 440,464 456,464 466,470 473,477 486,472 491,469 500,471 510,475 518,476 520,486 519,500"/>
<polyline points="473,477 474,484 467,490 464,500"/>
<polyline points="417,485 426,488 432,490 433,500"/>
<polyline points="282,492 288,493 294,492"/>
<polyline points="105,498 108,493 112,488"/>
<polyline points="887,498 895,494 905,492 914,490"/>
</g>
<g id="rivers" fill="none" stroke="#aac3f0" stroke-width="0.9" shape-rendering="auto" opacity="0.55">
<polyline points="622,285 629,290 636,294 635,300 632,305 637,314 642,322 650,329 658,337 664,338 670,343"/>
<polyline points="758,202 748,204 746,212 749,228"/>
<polyline points="747,253 746,262 755,266 766,263.6 773,257 778,248"/>
<polyline points="786,240.6 793,242 796,250 797,259"/>
<polyline points="914,234 907,231 900,233 897,239 891,246 889,260 887,272 890,284 893,294 891,306 886,322 892,332 898,340 906,346 910,356"/>
</g>
<g id="rivers2" fill="none" stroke="#aac3f0" stroke-width="1.3" shape-rendering="crispEdges">
<polyline points="645,443 651,441.6 652,450 651,458"/>
<polyline points="702,472 713,476 714,480 716,484 720,483 726,481"/>
<polyline points="726,481 741,478"/>
<polyline points="716,484 714,488 710,500"/>
<polyline points="607,394 613.6,401"/>
</g>
<path d="M711,475 L714,476 L716,479 L720,481 L722,483 L716,485.5 L713,481 Z" fill="#aac3f0"/>
<g id="gps" shape-rendering="auto"><circle cx="461" cy="274.8" r="11" fill="#c6c6c0"/><circle cx="461" cy="274.8" r="9" fill="#f3e42c"/>
<circle cx="461" cy="274.8" r="8.2" fill="none" stroke="#c9c9bf" stroke-width="1.7" stroke-dasharray="1.1,1.5" opacity="0.8"/>
<circle cx="461" cy="274.8" r="6.4" fill="none" stroke="#c6c6c0" stroke-width="1.7"/><circle cx="461" cy="274.8" r="5.5" fill="#f3e42c"/>
<path d="M461,262.8 V286.8 M449,274.8 H473" stroke="#c6c6c0" stroke-width="1.9" fill="none"/></g>
</svg>
<svg id="tbsvg" width="712" height="48" viewBox="4 30 712 48" style="position:absolute;left:4px;top:30px;overflow:visible">
<defs>
<linearGradient id="bg" x1="0" y1="0" x2="0" y2="1"><stop offset="0" stop-color="#eaeaea"/><stop offset="0.5" stop-color="#dcdcdc"/><stop offset="0.5" stop-color="#d4d4d4"/><stop offset="1" stop-color="#e0e0e0"/></linearGradient>
<radialGradient id="gryr" cx="0.5" cy="0.5" r="0.5"><stop offset="0" stop-color="#d0d5de"/><stop offset="1" stop-color="#9398a2"/></radialGradient>
<linearGradient id="gry" x1="0" y1="0" x2="1" y2="0"><stop offset="0" stop-color="#8a8f99"/><stop offset="0.5" stop-color="#c6ccd6"/><stop offset="1" stop-color="#8a8f99"/></linearGradient>
<linearGradient id="lens" x1="0" y1="0" x2="0" y2="1"><stop offset="0" stop-color="#2c5fb4"/><stop offset="0.35" stop-color="#58a8e0"/><stop offset="0.7" stop-color="#a4e2f6"/><stop offset="1" stop-color="#d4f6fc"/></linearGradient>
<linearGradient id="red" x1="0" y1="0" x2="1" y2="1"><stop offset="0" stop-color="#8c1616"/><stop offset="0.5" stop-color="#d41616"/><stop offset="1" stop-color="#941010"/></linearGradient>
<linearGradient id="water" x1="0" y1="0" x2="0" y2="1"><stop offset="0" stop-color="#b2b4b7"/><stop offset="0.25" stop-color="#a2a8b4"/><stop offset="0.6" stop-color="#6c8dc6"/><stop offset="0.85" stop-color="#3a6fd4"/><stop offset="1" stop-color="#1848e8"/></linearGradient>
<linearGradient id="org" x1="0" y1="0" x2="0" y2="1"><stop offset="0" stop-color="#ffd36a"/><stop offset="1" stop-color="#f09a10"/></linearGradient>
<linearGradient id="grn" x1="0" y1="0" x2="1" y2="0"><stop offset="0" stop-color="#1c8a2a"/><stop offset="0.5" stop-color="#4fc45a"/><stop offset="1" stop-color="#1c8a2a"/></linearGradient>
<linearGradient id="sky" x1="0" y1="0" x2="0" y2="1"><stop offset="0" stop-color="#f7cc58"/><stop offset="0.5" stop-color="#f2ae30"/><stop offset="1" stop-color="#e08a24"/></linearGradient>
<linearGradient id="sea2" x1="0" y1="0" x2="0" y2="1"><stop offset="0" stop-color="#777672"/><stop offset="1" stop-color="#505050"/></linearGradient>
<linearGradient id="ylw" x1="0" y1="0" x2="1" y2="1"><stop offset="0" stop-color="#fffbd0"/><stop offset="1" stop-color="#f4e23c"/></linearGradient>
<linearGradient id="grn2" x1="0" y1="0" x2="1" y2="1"><stop offset="0" stop-color="#8fe070"/><stop offset="1" stop-color="#18a020"/></linearGradient>
<linearGradient id="ring" x1="0" y1="0" x2="1" y2="1"><stop offset="0" stop-color="#ff9a40"/><stop offset="0.5" stop-color="#f07418"/><stop offset="1" stop-color="#d85a08"/></linearGradient>
<linearGradient id="steel" x1="0" y1="0" x2="1" y2="1"><stop offset="0" stop-color="#7a7a7a"/><stop offset="0.5" stop-color="#2e2e2e"/><stop offset="1" stop-color="#6a6a6a"/></linearGradient>
<linearGradient id="aa" x1="0" y1="0" x2="0" y2="1"><stop offset="0" stop-color="#111"/><stop offset="1" stop-color="#777"/></linearGradient>
<filter id="sh" x="-5%" y="-20%" width="110%" height="150%"><feGaussianBlur stdDeviation="0.9"/></filter>
</defs>
<path d="M5,31 H710 V73 Q710,75.5 707.5,75.5 H5 Z" fill="#6f86b8" opacity="0.75" filter="url(#sh)"/>
<path d="M4,30 H708.5 V71.5 Q708.5,74 706,74 H4 Z" fill="#e6e6e6"/>
<rect x="10.5" y="36.5" width="31" height="31" rx="4.5" ry="4.5" fill="url(#bg)" stroke="#989898" stroke-width="1"/>
<rect x="50.5" y="36.5" width="31" height="31" rx="4.5" ry="4.5" fill="url(#bg)" stroke="#989898" stroke-width="1"/>
<rect x="90.5" y="36.5" width="31" height="31" rx="4.5" ry="4.5" fill="url(#bg)" stroke="#b4b4b4" stroke-width="1"/>
<rect x="130.5" y="36.5" width="31" height="31" rx="4.5" ry="4.5" fill="url(#bg)" stroke="#b4b4b4" stroke-width="1"/>
<rect x="170.5" y="36.5" width="31" height="31" rx="4.5" ry="4.5" fill="url(#bg)" stroke="#989898" stroke-width="1"/>
<rect x="210.5" y="36.5" width="31" height="31" rx="4.5" ry="4.5" fill="url(#bg)" stroke="#989898" stroke-width="1"/>
<rect x="250.5" y="36.5" width="31" height="31" rx="4.5" ry="4.5" fill="url(#bg)" stroke="#989898" stroke-width="1"/>
<rect x="290.5" y="36.5" width="31" height="31" rx="4.5" ry="4.5" fill="url(#bg)" stroke="#989898" stroke-width="1"/>
<rect x="330.5" y="36.5" width="31" height="31" rx="4.5" ry="4.5" fill="url(#bg)" stroke="#989898" stroke-width="1"/>
<rect x="450.5" y="36.5" width="31" height="31" rx="4.5" ry="4.5" fill="url(#bg)" stroke="#989898" stroke-width="1"/>
<rect x="490.5" y="36.5" width="31" height="31" rx="4.5" ry="4.5" fill="url(#bg)" stroke="#989898" stroke-width="1"/>
<rect x="530.5" y="36.5" width="31" height="31" rx="4.5" ry="4.5" fill="url(#bg)" stroke="#989898" stroke-width="1"/>
<rect x="610.5" y="36.5" width="31" height="31" rx="4.5" ry="4.5" fill="url(#bg)" stroke="#989898" stroke-width="1"/>
<rect x="650.5" y="36.5" width="31" height="31" rx="4.5" ry="4.5" fill="url(#bg)" stroke="#989898" stroke-width="1"/>
<g><line x1="26.5" y1="53" x2="38" y2="64.6" stroke="#555" stroke-width="3.4" stroke-linecap="round"/><line x1="27" y1="53.5" x2="37.8" y2="64.4" stroke="#dcdcdc" stroke-width="1.3" stroke-linecap="round"/><circle cx="20.5" cy="46.5" r="7.5" fill="url(#lens)" stroke="#7c7c7c" stroke-width="1.3"/><line x1="16" y1="46.5" x2="25" y2="46.5" stroke="#2458b8" stroke-width="2"/><line x1="20.5" y1="42" x2="20.5" y2="51" stroke="#2458b8" stroke-width="2"/></g>
<g><line x1="66.5" y1="53" x2="78" y2="64.6" stroke="#555" stroke-width="3.4" stroke-linecap="round"/><line x1="67" y1="53.5" x2="77.8" y2="64.4" stroke="#dcdcdc" stroke-width="1.3" stroke-linecap="round"/><circle cx="60.5" cy="46.5" r="7.5" fill="url(#lens)" stroke="#7c7c7c" stroke-width="1.3"/><line x1="56" y1="46.5" x2="65" y2="46.5" stroke="#2458b8" stroke-width="2"/></g>
<g opacity="0.95"><path d="M100,38.5 H110 V41 H116.5 L105,57 L93.5,41 H100 Z" fill="url(#gry)" stroke="#80858f" stroke-width="0.8"/><circle cx="105" cy="62.5" r="3.3" fill="url(#gryr)" stroke="#858a94" stroke-width="0.7"/></g>
<g opacity="0.95"><path d="M145,46.5 L156.5,62.5 H150 V65.5 H140 V62.5 H134 Z" fill="url(#gry)" stroke="#80858f" stroke-width="0.8"/><circle cx="145.2" cy="41.2" r="3.3" fill="url(#gryr)" stroke="#858a94" stroke-width="0.7"/></g>
<g><polyline points="174.5,63.5 178,46.5 191,54.5" fill="none" stroke="#3458ff" stroke-width="1.6"/><polyline points="191,54.5 199,39.5" fill="none" stroke="#0a1e9c" stroke-width="1.6"/><polyline points="194.3,41.6 199.6,38.4 199.8,45" fill="none" stroke="#0a1e9c" stroke-width="1.6"/><rect x="172.5" y="61.5" width="4.4" height="4.4" fill="#1430ff"/><rect x="176" y="44.5" width="4.2" height="4.2" fill="#1430ff"/><rect x="189" y="52.5" width="4.2" height="4.2" fill="#1430ff"/></g>
<g><path d="M240,38.4 Q226,40 212,58.5 L219,65.6 Q238.5,56 240,38.4 Z" fill="url(#red)" stroke="#5a0c0c" stroke-width="0.8"/><circle cx="227.3" cy="50.5" r="2.3" fill="#f2f2f2" stroke="#6a4a4a" stroke-width="0.7"/></g>
<g><line x1="255.5" y1="62.5" x2="269.5" y2="48.5" stroke="url(#steel)" stroke-width="4.2" stroke-linecap="round"/><circle cx="255.5" cy="62.6" r="1.1" fill="#e8e8e8"/><path d="M268,50.5 Q266.5,45.5 269.5,41.5 Q272,38.5 276,38.8 L272.6,42.6 L274,46 L277.6,46.4 L278.4,43 Q279.6,47.6 276.4,50.2 Q273,52.6 268,50.5 Z" fill="#ededed" stroke="#8a8a8a" stroke-width="0.7"/><circle cx="271.3" cy="46.7" r="1.2" fill="#444"/></g>
<g opacity="0.99"><text x="293.4" y="61" font-family="'Liberation Serif','DejaVu Serif',serif" font-style="italic" font-size="32" fill="url(#aa)" stroke="#333" stroke-width="0.3">A</text><path d="M312.4,54.5 h3.4 v3.9 h3.9 v3.4 h-3.9 v3.9 h-3.4 v-3.9 h-3.9 v-3.4 h3.9 Z" fill="#3fc048" stroke="#187a20" stroke-width="0.7"/></g>
<g><line x1="334.5" y1="60" x2="341" y2="50" stroke="#555" stroke-width="0.8"/><path d="M344.5,38 L351.6,43.6 L340,51.6 Z" fill="url(#ylw)" stroke="#b8b060" stroke-width="0.6"/><circle cx="334.5" cy="60.2" r="2.1" fill="#f6ec50" stroke="#a09830" stroke-width="0.6"/><line x1="341" y1="63.5" x2="347" y2="60" stroke="#355" stroke-width="0.8"/><path d="M354.5,49 L359.6,56 L346,61 Z" fill="url(#grn2)" stroke="#2a8a30" stroke-width="0.6"/><circle cx="341" cy="63.5" r="2.2" fill="#1d9a28" stroke="#0f6a18" stroke-width="0.6"/></g>
<g><rect x="370.5" y="36.5" width="31" height="31" rx="4.5" fill="#e2e2e2" stroke="#989898"/><path d="M370.8,47 q4,-1.2 8,0 t8,0 t8,0 t6.4,-0.3 V63 Q401.2,67.2 397,67.2 H375 Q370.8,67.2 370.8,63 Z" fill="url(#water)"/><path d="M370.8,47 q4,-1.2 8,0 t8,0 t8,0 t6.4,-0.3" fill="none" stroke="#777" stroke-width="0.7"/><path d="M371,62 Q371,67 375,67 H397 Q401,67 401,62" fill="none" stroke="#0a22d8" stroke-width="1.2"/></g>
<g><rect x="378" y="39.9" width="16" height="1.9" fill="#f0a010"/><path d="M371,40.8 L379.5,36.4 V45.2 Z" fill="url(#org)" stroke="#e09410" stroke-width="0.4"/><path d="M401.4,40.8 L392.8,36.4 V45.2 Z" fill="url(#org)" stroke="#e09410" stroke-width="0.4"/></g>
<g><rect x="410.5" y="36.5" width="31" height="31" rx="4.5" fill="#e2e2e2" stroke="#989898"/><path d="M410.8,47 q4,-1.2 8,0 t8,0 t8,0 t6.4,-0.3 V63 Q441.2,67.2 437,67.2 H415 Q410.8,67.2 410.8,63 Z" fill="url(#water)"/><path d="M410.8,47 q4,-1.2 8,0 t8,0 t8,0 t6.4,-0.3" fill="none" stroke="#777" stroke-width="0.7"/><path d="M411,62 Q411,67 415,67 H437 Q441,67 441,62" fill="none" stroke="#0a22d8" stroke-width="1.2"/></g>
<g><rect x="413.6" y="44" width="1.9" height="15" fill="#3cc050"/><path d="M414.5,36.4 L419,45.5 H410.2 Z" fill="url(#grn)"/><path d="M414.5,67.2 L419,58 H410.2 Z" fill="url(#grn)"/></g>
<g><rect x="457.5" y="37.6" width="17" height="11.4" fill="#fbfbfb" stroke="#b8b8b8" stroke-width="0.6"/>
<path d="M451.5,49.4 Q451.5,46.8 454.4,46.8 H477.6 Q480.5,46.8 480.5,49.4 V59.4 H451.5 Z" fill="#ececec" stroke="#a4a4a4" stroke-width="0.6"/>
<rect x="457" y="46.8" width="18" height="2.4" fill="#d8d8d8"/>
<rect x="456.5" y="50.3" width="19" height="3.2" fill="#6a6a6a"/><rect x="452" y="54" width="28" height="1" fill="#fdfdfd"/>
<rect x="455.5" y="56.6" width="21" height="2.8" fill="#1c1c1c"/>
<path d="M458,59.4 H474 L475,65.6 H457 Z" fill="#fbfbfb" stroke="#b4b4b4" stroke-width="0.5"/><rect x="478" y="55.5" width="1" height="2.2" fill="#666"/></g>
<g><rect x="493.2" y="38.7" width="26" height="26" fill="#ececec" stroke="#5868d8" stroke-width="1.2"/>
<path d="M493,39 H519.5 M493.3,39 V64.5" stroke="#2838c8" stroke-width="1.8" fill="none" opacity="0.6"/>
<g stroke="#a4a4a4" stroke-width="1.6"><line x1="494.5" y1="43" x2="518.5" y2="43"/><line x1="494.5" y1="47" x2="518.5" y2="47"/><line x1="494.5" y1="51" x2="518.5" y2="51"/><line x1="494.5" y1="55" x2="518.5" y2="55"/><line x1="494.5" y1="59" x2="518.5" y2="59"/><line x1="494.5" y1="62.8" x2="518.5" y2="62.8"/></g>
<line x1="494" y1="40.6" x2="519" y2="40.6" stroke="#b09878" stroke-width="0.8"/>
<polyline points="497,60.5 498.6,45.5 507.5,57.5" fill="none" stroke="#2a34d8" stroke-width="1.8"/><line x1="497.4" y1="59" x2="498.4" y2="48" stroke="#e020c0" stroke-width="0.7"/>
<polyline points="507.5,57.5 512,51" fill="none" stroke="#c83ad0" stroke-width="1.6"/><path d="M511.2,52.2 Q513,47.5 517.8,44.6 Q517,49.6 512.8,53.2 Z" fill="#d02020"/>
<rect x="495.4" y="58.6" width="3.4" height="3.4" fill="#fff" stroke="#2030c8" stroke-width="0.7"/><rect x="496.8" y="43.8" width="3.4" height="3.4" fill="#fff" stroke="#2030c8" stroke-width="0.7"/><rect x="505.8" y="55.6" width="3.4" height="3.4" fill="#fff" stroke="#2030c8" stroke-width="0.7"/></g>
<g><rect x="536" y="58.2" width="19.6" height="3.4" fill="#dca6ac" stroke="#b88890" stroke-width="0.5"/>
<path d="M546,41.3 C536,42 529.5,47.5 534.5,50.5 C540,53.5 553,51.5 555,56 C556.5,60 546,63 535,65.6" fill="none" stroke="#e818d8" stroke-width="1.5" stroke-linecap="round"/>
<path d="M549,52.3 C553,53 555.3,54.5 555,57 C554.7,59 552,60.5 549,61.6" fill="none" stroke="#9a20b0" stroke-width="1.5"/>
<path d="M545.6,39.2 Q553,37.5 560,39 Q556,43 546.4,43.4 Z" fill="#d81818" stroke="#7a1010" stroke-width="0.5"/><circle cx="552.8" cy="40.6" r="1" fill="#fff"/><path d="M548,59.5 l1.5,-0.8 1.5,0.4 1.5,-1" stroke="#70d8f0" stroke-width="0.8" fill="none"/></g>
<g><clipPath id="c15"><rect x="570.5" y="36.5" width="31" height="31" rx="4.5"/></clipPath><g clip-path="url(#c15)">
<rect x="570" y="36" width="32" height="17" fill="url(#sky)"/><circle cx="579" cy="46.6" r="5.5" fill="#ffe070" opacity="0.35"/><circle cx="579" cy="46.8" r="3" fill="#ffe47a" opacity="0.85"/>
<path d="M570,51.2 l3,-0.9 3,0.2 3,0.9 3,0.4 4,-0.5 4,-1 4,0.1 4,0.6 4,0.3 V54.6 H570 Z" fill="#5c4a34"/><rect x="570" y="52.8" width="32" height="1.9" fill="#38383a"/>
<rect x="570" y="54.6" width="32" height="13.4" fill="url(#sea2)"/><rect x="573.5" y="54.6" width="10.5" height="13" fill="#b09440" opacity="0.4"/><rect x="576" y="54.6" width="5.5" height="13" fill="#d4b04c" opacity="0.45"/></g>
<rect x="570.5" y="36.5" width="31" height="31" rx="4.5" fill="none" stroke="#8f8f8f"/></g>
<g><circle cx="626.2" cy="52" r="10.4" fill="none" stroke="url(#ring)" stroke-width="5.4"/>
<circle cx="626.2" cy="52" r="13.1" fill="none" stroke="#c85a10" stroke-width="0.5"/><circle cx="626.2" cy="52" r="7.7" fill="none" stroke="#c85a10" stroke-width="0.5"/>
<g fill="#f4f8ff"><rect x="624.2" y="38.8" width="4" height="5.6"/><rect x="624.2" y="59.6" width="4" height="5.6"/><rect x="613" y="50" width="5.6" height="4"/><rect x="633.8" y="50" width="5.6" height="4"/></g>
<g fill="#5a9cf0" opacity="0.85"><rect x="624.2" y="59.6" width="4" height="2.4"/><rect x="616.4" y="50" width="2.2" height="4"/><rect x="633.8" y="50" width="2.2" height="4"/></g>
<path d="M615,45 Q617,39 622,38.5 M631,63.5 Q629,58 634,56 Q638,55.5 639,54" fill="none" stroke="#b0b0b0" stroke-width="0.7"/></g>
<g><rect x="655" y="38" width="22" height="28" fill="#4c86d8"/><rect x="655" y="38" width="5" height="28" fill="#1a1a1a"/><rect x="660" y="38" width="1" height="28" fill="#3a64a8"/>
<rect x="655.5" y="38.2" width="21.5" height="1.2" fill="#e8e8e8"/><rect x="655" y="65" width="22" height="1" fill="#2a4a88"/>
<text opacity="0.99" x="661.4" y="62" font-family="'Liberation Sans','DejaVu Sans',sans-serif" font-size="25" fill="#ffffff" stroke="#4c86d8" stroke-width="0.9">?</text></g>
<circle cx="702.5" cy="39.5" r="1.2" fill="#fdfdfd"/>
<circle cx="699.5" cy="42.5" r="1.2" fill="#fdfdfd"/>
<circle cx="702.5" cy="45.5" r="1.2" fill="#fdfdfd"/>
<circle cx="699.5" cy="48.5" r="1.2" fill="#fdfdfd"/>
<circle cx="702.5" cy="51.5" r="1.2" fill="#fdfdfd"/>
<circle cx="699.5" cy="54.5" r="1.2" fill="#fdfdfd"/>
<circle cx="702.5" cy="57.5" r="1.2" fill="#fdfdfd"/>
<circle cx="699.5" cy="60.5" r="1.2" fill="#fdfdfd"/>
<circle cx="702.5" cy="63.5" r="1.2" fill="#fdfdfd"/>
</svg>
<div id="inst"><svg width="80" height="38" viewBox="834 32 80 38" style="position:absolute;left:0;top:0">
<defs><radialGradient id="cg" cx="0.5" cy="0.5" r="0.5"><stop offset="0" stop-color="#f4f4f4"/><stop offset="0.6" stop-color="#d0d0d0"/><stop offset="1" stop-color="#9a9a9a"/></radialGradient>
<linearGradient id="rg" x1="0" y1="0" x2="0" y2="1"><stop offset="0" stop-color="#f01010"/><stop offset="0.55" stop-color="#b80c0c"/><stop offset="1" stop-color="#d88080"/></linearGradient>
<linearGradient id="bl" x1="0" y1="0" x2="1" y2="0"><stop offset="0" stop-color="#0a2a9a"/><stop offset="0.5" stop-color="#2a5ae8"/><stop offset="1" stop-color="#0a2a9a"/></linearGradient></defs>
<rect x="834.5" y="32.5" width="79" height="37" rx="3.5" fill="#e6e6e6" stroke="#000" stroke-width="1"/>
<circle cx="853.9" cy="50" r="10.8" fill="url(#cg)" stroke="#555" stroke-width="0.8"/>
<path d="M853.9,37 L857.6,64 H850 Z" fill="url(#bl)" stroke="#222" stroke-width="0.6"/>
<circle cx="889.5" cy="54.2" r="9" fill="url(#rg)" stroke="#6a3a3a" stroke-width="0.7"/>
<g transform="rotate(-32 877.3 41.8)" fill="#444"><rect x="872" y="41.1" width="10.6" height="1.4"/><rect x="871.6" y="37.6" width="2.3" height="8.4"/><rect x="880.7" y="37.6" width="2.3" height="8.4"/><rect x="875.2" y="39.7" width="4.2" height="4.2" fill="#555"/></g>
</svg></div>
<div id="status">
<span style="left:244.8px;letter-spacing:-1.10px">SOG</span>
<span style="left:273.4px;letter-spacing:0.00px">---</span>
<span style="left:288.4px;letter-spacing:0.59px">kts</span>
<span style="left:313.0px;letter-spacing:-0.94px">COG</span>
<span style="left:342.8px;letter-spacing:0.00px">---</span>
<span style="left:354.8px;letter-spacing:-0.20px">°</span>
<span style="left:447.4px;letter-spacing:-0.23px">71</span>
<span style="left:466.4px;letter-spacing:0.29px">58.9709</span>
<span style="left:519.4px;letter-spacing:0.61px">N</span>
<span style="left:538.4px;letter-spacing:0.77px">032</span>
<span style="left:566.4px;letter-spacing:0.29px">30.3492</span>
<span style="left:618.4px;letter-spacing:0.33px">E</span>
<span style="left:643.0px;letter-spacing:0.38px">020°</span>
<span style="left:677.0px;letter-spacing:0.23px">447</span>
<span style="left:703.8px;letter-spacing:0.50px">NMi</span>
<span style="left:762.4px;letter-spacing:-0.19px">Scale</span>
<span style="left:797.4px;letter-spacing:0.52px">39425600</span>
<span style="left:864.0px;letter-spacing:0.19px">(0.56x)</span>
</div>
</body></html>
